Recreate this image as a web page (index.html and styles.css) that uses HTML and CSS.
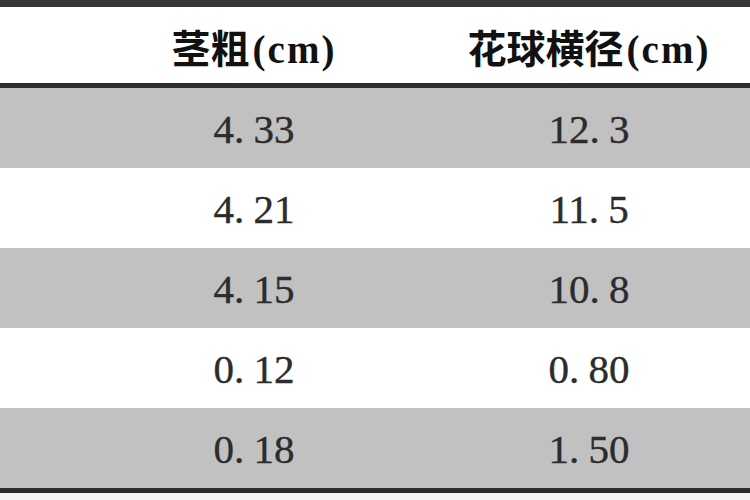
FILE: index.html
```html
<!DOCTYPE html>
<html lang="zh-CN">
<head>
<meta charset="utf-8">
<title>茎粗与花球横径</title>
<link rel="stylesheet" href="styles.css">
</head>
<body>
<div class="table">
  <div class="row head">
    <div class="cell"></div>
    <div class="cell"><span class="cjk">茎粗</span><span class="unit">(cm)</span></div>
    <div class="cell"><span class="cjk">花球横径</span><span class="unit">(cm)</span></div>
  </div>
  <div class="row shade">
    <div class="cell"></div>
    <div class="cell num">4<span class="dot">.</span>33</div>
    <div class="cell num">12<span class="dot">.</span>3</div>
  </div>
  <div class="row">
    <div class="cell"></div>
    <div class="cell num">4<span class="dot">.</span>21</div>
    <div class="cell num">11<span class="dot">.</span>5</div>
  </div>
  <div class="row shade">
    <div class="cell"></div>
    <div class="cell num">4<span class="dot">.</span>15</div>
    <div class="cell num">10<span class="dot">.</span>8</div>
  </div>
  <div class="row">
    <div class="cell"></div>
    <div class="cell num">0<span class="dot">.</span>12</div>
    <div class="cell num">0<span class="dot">.</span>80</div>
  </div>
  <div class="row shade last">
    <div class="cell"></div>
    <div class="cell num">0<span class="dot">.</span>18</div>
    <div class="cell num">1<span class="dot">.</span>50</div>
  </div>
</div>
</body>
</html>
```
FILE: styles.css
```css
html, body {
  margin: 0;
  padding: 0;
}

body {
  width: 750px;
  height: 500px;
  overflow: hidden;
  background: #f6f6f6;
}

.table {
  display: flex;
  flex-direction: column;
  border-top: 7px solid #383838;
  border-bottom: 5px solid #2e2e2e;
  background: #ffffff;
}

.row {
  display: grid;
  grid-template-columns: 80px 348px 322px;
  height: 80px;
  align-items: center;
  background: #ffffff;
}

.row.head {
  height: 81px;
  padding-top: 6px;
  box-sizing: border-box;
  border-bottom: 5px solid #2e2e2e;
}

.row.shade {
  background: #c1c1c1;
}

.cell {
  text-align: center;
  white-space: nowrap;
}

.head .cell {
  color: #111111;
  font-weight: 700;
  font-size: 39px;
  line-height: 40px;
}

.cjk {
  font-family: "Noto Sans CJK SC", sans-serif;
  font-weight: 700;
}

.unit {
  font-family: "Liberation Serif", serif;
  font-weight: 700;
  letter-spacing: 2px;
  margin-left: 3px;
}

.num {
  font-family: "Liberation Serif", serif;
  font-size: 41px;
  line-height: 44px;
  color: #2c2c2c;
  -webkit-text-stroke: 0.4px #2c2c2c;
  padding-top: 2px;
}

.dot {
  margin-right: 0.22em;
}
```
